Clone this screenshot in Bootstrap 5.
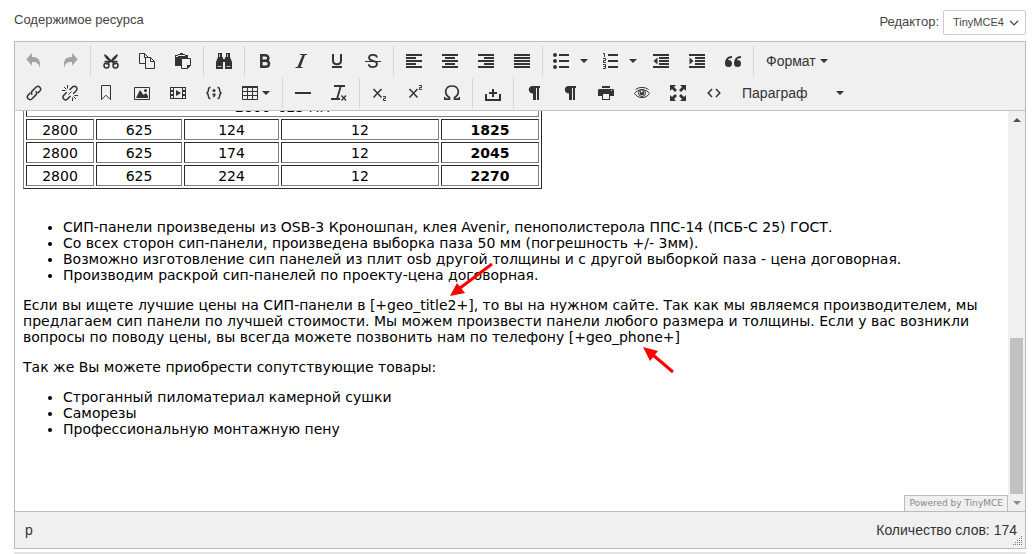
<!DOCTYPE html>
<html lang="ru">
<head>
<meta charset="utf-8">
<meta name="viewport" content="width=device-width, initial-scale=1">
<title>Содержимое ресурса</title>
<link href="https://cdn.jsdelivr.net/npm/bootstrap@5.3.0/dist/css/bootstrap.min.css" rel="stylesheet">
<style>
body{font-family:"Liberation Sans",Arial,sans-serif;font-size:14px;line-height:20px;color:#333;background:#fff;overflow:hidden}
.resource{padding:7px 7px 0 14px}
.topline{font-size:13px;height:34px;color:#444}
.topline label{line-height:18px;padding-top:4px}
.topline .pick-label{padding-top:6px}
.pick{width:83px;height:25px;margin-top:3px;font-size:11px;padding:0 0 0 9px;border:1px solid #ccc;border-radius:2px;color:#444;background-position:right 6px center;background-size:10px 12px;box-shadow:none}
.editor{border:1px solid #bbb}
.toolbars{background:#f0f0f0;border-bottom:1px solid #c5c5c5;padding:4px 1px 2px;gap:2px}
.tools{height:30px}
.tool{border:0;background:none;color:#333;height:30px;min-width:36px;padding:0 10px;display:flex;align-items:center;justify-content:center;gap:4px;line-height:20px}
.tool.split{padding:0 6px 0 8px;gap:11px;width:49px}
.tool.menu{padding:0 10px;width:48px}
.tool svg{width:16px;height:16px;flex:none}
.tool:disabled{color:#a3a3a3}
.tool::after{content:none}
.tool.drop::after{content:"";border:4px solid transparent;border-top-color:#333;border-bottom:0;flex:none}
.tool.wide{width:122px;justify-content:space-between}
.divider{width:1px;margin:0 2px;background:#d5d5d5;align-self:stretch}
.frame{height:400px;background:#fff}
.page-text{font-family:"DejaVu Sans",Verdana,sans-serif;color:#000;line-height:16px;padding:0 8px;overflow:hidden;min-width:0}
.page-text p{margin:0 0 14px}
.page-text ul{margin:0 0 14px;padding-left:40px}
.prices{border:1px solid;border-color:gray #2c2c2c #2c2c2c gray;border-collapse:separate;border-spacing:2px;width:519px;table-layout:fixed;margin:-18px 0 30px;text-align:center}
.prices td{border:1px solid;border-color:#2c2c2c gray gray #2c2c2c;padding:3px 1px 2px;height:21px;line-height:14px}
.arrows{left:0;top:0;width:100%;height:100%;pointer-events:none}
.scroller{width:17px;background:#f0f0f0;flex:none}
.arrow{height:17px;display:flex;align-items:center;justify-content:center}
.thumb{width:13px;height:156px;background:#c1c1c1;margin:auto auto 0}
.powered{right:17px;bottom:0;height:16px;padding:0 4px;border:1px solid #bbb;border-bottom:0;background:#f0f0f0;color:#8a8a8a;font:9px/14px "DejaVu Sans",sans-serif;text-decoration:none}
.status{background:#f0f0f0;border-top:1px solid #bbb;height:37px;padding:0 8px 0 10px}
.grip{right:2px;bottom:2px;width:10px;height:10px}
.nextbox{border-top:2px solid #e3e3e3;margin-top:3px;height:8px;background:#f0f0f0}
</style>
</head>
<body>
<svg class="d-none" xmlns="http://www.w3.org/2000/svg">
<symbol id="undo" viewBox="0 0 16 16"><path fill="currentColor" d="M6 0v4c6-.4 9.500 3.500 7.500 11-.2-4.600-2.800-6.300-7.500-6.100v3.800L.3 6.300z"/></symbol>
<symbol id="cut" viewBox="0 0 16 16"><g fill="none" stroke="currentColor" stroke-width="1.500"><circle cx="3.500" cy="12.500" r="2.500"/><circle cx="12.500" cy="12.500" r="2.500"/></g><path fill="currentColor" d="M1.300 1.200c2 .3 4 2.600 6.700 5.700 2.700-3.100 4.700-5.400 6.700-5.700.6 1.400-1.500 4.500-4.700 6.600h4.500v1.500h-4L13 11l-1 1-4-3-4 3-1-1 2.500-1.700h-4V7.800H6C2.800 5.700.7 2.600 1.300 1.200z"/></symbol>
<symbol id="copy" viewBox="0 0 16 16"><g fill="none" stroke="currentColor"><path d="M9.500 10.500h-9V.5h5l4 4z"/><path d="M5.500.5v4h4"/><path fill="#f0f0f0" d="M6.500 4.500h5l4 4v7h-9z"/><path d="M11.500 4.500v4h4"/></g></symbol>
<symbol id="paste" viewBox="0 0 16 16"><path fill="currentColor" d="M0 2h3V1h2a1.500 1.500 0 0 1 3 0h2v1h3v3h-1V4H3V3h7V2H3v1H1v1h11v1H6v8H0z"/><path fill="#f0f0f0" stroke="currentColor" d="M6.500 5.500h9v7l-3 3h-6z"/><path fill="currentColor" d="M12 16v-4h4z"/></symbol>
<symbol id="find" viewBox="0 0 16 16"><path fill="currentColor" d="M2 0h4v4h1v2h2V4h1V0h4v4l2 5v7H9V9H7v7H0V9l2-5z"/><path fill="#f0f0f0" d="M3 1h1v3H3zM11 1h1v3h-1zM1.500 13h4v1h-4zM10.500 13h4v1h-4z" opacity=".75"/></symbol>
<symbol id="bold" viewBox="0 0 16 16"><path fill="none" stroke="currentColor" stroke-width="2.500" d="M4.300 2.200v11.600h4.200c4.700 0 4.700-6 0-6H4.500h3.700c4.200 0 4.200-5.600 0-5.600H3"/></symbol>
<symbol id="italic" viewBox="0 0 16 16"><path fill="currentColor" d="M7 1h7v1h-2L7.500 14h2v1h-7v-1h2L9.500 2H7z"/></symbol>
<symbol id="under" viewBox="0 0 16 16"><path fill="none" stroke="currentColor" stroke-width="2" d="M4 1v6.500c0 5 8 5 8 0V1"/><path fill="currentColor" d="M3 13h10v2H3z"/></symbol>
<symbol id="strike" viewBox="0 0 16 16"><path fill="none" stroke="currentColor" stroke-width="1.800" d="M12 4.500C11.500.9 4 1.200 4 4.800c0 4.200 8 2 8 6 0 4.300-8 4.300-8.200.5"/><path fill="currentColor" d="M0 8h16v1H0z"/></symbol>
<symbol id="left" viewBox="0 0 16 16"><path fill="currentColor" d="M0 1h16v2H0zM0 4h10v2H0zM0 7h16v2H0zM0 10h10v2H0zM0 13h16v2H0z"/></symbol>
<symbol id="center" viewBox="0 0 16 16"><path fill="currentColor" d="M0 1h16v2H0zM3 4h10v2H3zM0 7h16v2H0zM3 10h10v2H3zM0 13h16v2H0z"/></symbol>
<symbol id="justify" viewBox="0 0 16 16"><path fill="currentColor" d="M0 1h16v2H0zM0 4h16v2H0zM0 7h16v2H0zM0 10h16v2H0zM0 13h16v2H0z"/></symbol>
<symbol id="bullets" viewBox="0 0 16 16"><g fill="currentColor"><path d="M6 1h10v2H6zM6 7h10v2H6zM6 13h10v2H6z"/><circle cx="2" cy="2" r="2"/><circle cx="2" cy="8" r="2"/><circle cx="2" cy="14" r="2"/></g></symbol>
<symbol id="numbers" viewBox="0 0 16 16"><path fill="currentColor" d="M6 1h10v2H6zM6 7h10v2H6zM6 13h10v2H6z"/><path fill="none" stroke="currentColor" d="M1 .5h1.500V4M1 5.500h2.500v2h-2v2H4M1 11.500h2.500v4H1M1.500 13.500h2"/></symbol>
<symbol id="outdent" viewBox="0 0 16 16"><path fill="currentColor" d="M0 1h16v2H0zM6 4h10v2H6zM6 7h10v2H6zM6 10h10v2H6zM0 13h16v2H0zM4.500 4.500v7L.5 8z"/></symbol>
<symbol id="indent" viewBox="0 0 16 16"><path fill="currentColor" d="M0 1h16v2H0zM6 4h10v2H6zM6 7h10v2H6zM6 10h10v2H6zM0 13h16v2H0zM.5 4.500v7l4-3.500z"/></symbol>
<symbol id="quote" viewBox="0 0 16 16"><path fill="currentColor" d="M3.500 7A3.500 3.500 0 1 1 0 10.500C0 6 2.500 3 7 3v2C4.800 5 3.500 5.700 2.800 7z"/><path fill="currentColor" d="M12.500 7A3.500 3.500 0 1 1 9 10.500C9 6 11.500 3 16 3v2c-2.200 0-3.500.7-4.200 2z"/></symbol>
<symbol id="link" viewBox="0 0 16 16"><g fill="none" stroke="currentColor" stroke-width="1.500"><path d="M6.300 9.700a2.700 2.700 0 0 1 0-3.800l3.900-3.900a2.700 2.700 0 0 1 3.800 3.800l-2.300 2.300"/><path d="M9.700 6.300a2.700 2.700 0 0 1 0 3.800L5.800 14A2.700 2.700 0 0 1 2 10.200l2.300-2.300"/></g></symbol>
<symbol id="unlink" viewBox="0 0 16 16"><g fill="none" stroke="currentColor" stroke-width="1.500"><path d="M7.500 5l3-3a2.500 2.500 0 0 1 3.700 3.700l-3 3M8.500 11l-3 3a2.500 2.500 0 0 1-3.700-3.700l3-3"/><path stroke-width="1" d="M5.500 0v3.500M2 2l2.500 2.500M0 5.500h3.500M10.500 12.500V16M11.500 11.500L14 14M12.500 10.500H16M6.500 9.500l3-3"/></g></symbol>
<symbol id="mark-page" viewBox="0 0 16 16"><path fill="none" stroke="currentColor" d="M3.500.5h9v14.200L8 10.200l-4.500 4.500z"/></symbol>
<symbol id="picture" viewBox="0 0 16 16"><path fill="none" stroke="currentColor" d="M.5 2.500h15v12H.5z"/><path fill="currentColor" d="M2 13l4-8 3.500 5L12 8l2 3v2z"/><circle cx="11.500" cy="5.500" r="1.500" fill="currentColor"/></symbol>
<symbol id="video" viewBox="0 0 16 16"><path fill="currentColor" fill-rule="evenodd" d="M0 2h16v12H0zM1 3v2h2V3zm0 4v2h2V7zm0 4v2h2v-2zm12-8v2h2V3zm0 4v2h2V7zm0 4v2h2v-2zM4 3v10h8V3z"/><path fill="currentColor" d="M6 5l5 3-5 3z"/></symbol>
<symbol id="snippet" viewBox="0 0 16 16"><path fill="none" stroke="currentColor" stroke-width="1.500" d="M4.500 2.500C1 2 3.800 7.500.5 8c3.300.5.500 6 4 5.500M11.500 2.500C15 2 12.200 7.500 15.500 8c-3.300.5-.5 6-4 5.500"/><circle cx="8" cy="5.500" r="1.500" fill="currentColor"/><path fill="currentColor" d="M6.500 8.500h3c.4 2-.3 3.500-2.500 4v-1q1-.5 1-1H6.500z"/></symbol>
<symbol id="grid" viewBox="0 0 16 16"><path fill="none" stroke="currentColor" d="M.5 1.500h15v13H.5zM0 6.500h16M0 10.500h16M5.500 2v12M10.500 2v12"/><path fill="currentColor" d="M0 1h16v2H0z"/></symbol>
<symbol id="rule" viewBox="0 0 16 16"><path fill="currentColor" d="M0 7h16v2H0z"/></symbol>
<symbol id="clear" viewBox="0 0 16 16"><path fill="none" stroke="currentColor" stroke-width="1.800" d="M3 1h11M9.800 1L6 14"/><path fill="currentColor" d="M0 13h9v2H0z"/><path fill="none" stroke="currentColor" stroke-width="1.300" d="M10.500 10.500l4.500 5M15 10.500l-4.500 5"/></symbol>
<symbol id="sub" viewBox="0 0 16 16"><path fill="none" stroke="currentColor" stroke-width="1.500" d="M1.500 4l8 8.500M9.500 4l-8 8.500"/><path fill="none" stroke="currentColor" d="M11 11.500h2.500v2h-2v2H14"/></symbol>
<symbol id="sup" viewBox="0 0 16 16"><path fill="none" stroke="currentColor" stroke-width="1.500" d="M1.500 4l8 8.500M9.500 4l-8 8.500"/><path fill="none" stroke="currentColor" d="M11 .5h2.500v2h-2v2H14"/></symbol>
<symbol id="omega" viewBox="0 0 16 16"><path fill="none" stroke="currentColor" stroke-width="1.700" d="M.5 14.200h5V12.500C-.5 9 1 1 8 1s8.500 8 2.500 11.500v1.700h5M.7 15v-3M15.300 15v-3"/></symbol>
<symbol id="nbsp" viewBox="0 0 16 16"><path fill="currentColor" d="M0 9h2v5h12V9h2v7H0zM7 4h2v3h3v2H9v3H7V9H4V7h3z"/></symbol>
<symbol id="para" viewBox="0 0 16 16"><path fill="currentColor" d="M6.500 1H14v2h-1v12h-2V3h-1v12H7V8.500C1.500 8.500 1.500 1 6.500 1z"/></symbol>
<symbol id="print" viewBox="0 0 16 16"><path fill="currentColor" d="M4 1h8v2H4zM1 4h14l1 1v6h-4v4H4v-4H0V5z"/><path fill="#f0f0f0" d="M5 9h6v5H5zM13 5h1v1h-1z"/></symbol>
<symbol id="eye" viewBox="0 0 16 16"><path fill="none" stroke="currentColor" d="M.5 8.500C4 3.500 12 3.500 15.500 8.500 12 14 4 14 .5 8.500zM1.500 4.500C5 1.800 11 1.800 14.500 4.500"/><circle cx="8" cy="8" r="3.500" fill="none" stroke="currentColor"/><circle cx="8" cy="8" r="2.300" fill="currentColor"/><path fill="#f0f0f0" d="M7 6h1.500v1.500H7z"/></symbol>
<symbol id="full" viewBox="0 0 16 16"><path fill="currentColor" d="M0 0h6L4 2l3 3-2 2-3-3-2 2zM16 0v6l-2-2-3 3-2-2 3-3-2-2zM0 16v-6l2 2 3-3 2 2-3 3 2 2zM16 16h-6l2-2-3-3 2-2 3 3 2-2z"/></symbol>
<symbol id="source" viewBox="0 0 16 16"><path fill="none" stroke="currentColor" stroke-width="1.500" d="M6 4L2.200 8 6 12M10 4l3.800 4L10 12"/></symbol>
</svg>
<main class="resource">
<div class="topline d-flex justify-content-between">
<label for="content">Содержимое ресурса</label>
<div class="d-flex align-items-start gap-1"><label for="which" class="pick-label">Редактор:</label>
<select id="which" class="form-select pick"><option>TinyMCE4</option></select></div>
</div>
<section class="editor">
<div class="toolbars d-flex flex-column" role="toolbar">
<div class="tools d-flex">
<button class="tool" disabled aria-label="Отменить"><svg><use href="#undo"/></svg></button>
<button class="tool" disabled aria-label="Вернуть"><svg><use href="#undo" transform="matrix(-1 0 0 1 16 0)"/></svg></button>
<span class="divider"></span>
<button class="tool" aria-label="Вырезать"><svg><use href="#cut"/></svg></button>
<button class="tool" aria-label="Копировать"><svg><use href="#copy"/></svg></button>
<button class="tool" aria-label="Вставить"><svg><use href="#paste"/></svg></button>
<span class="divider"></span>
<button class="tool" aria-label="Найти"><svg><use href="#find"/></svg></button>
<span class="divider"></span>
<button class="tool" aria-label="Полужирный"><svg><use href="#bold"/></svg></button>
<button class="tool" aria-label="Курсив"><svg><use href="#italic"/></svg></button>
<button class="tool" aria-label="Подчеркнутый"><svg><use href="#under"/></svg></button>
<button class="tool" aria-label="Зачеркнутый"><svg><use href="#strike"/></svg></button>
<span class="divider"></span>
<button class="tool" aria-label="По левому краю"><svg><use href="#left"/></svg></button>
<button class="tool" aria-label="По центру"><svg><use href="#center"/></svg></button>
<button class="tool" aria-label="По правому краю"><svg><use href="#left" transform="matrix(-1 0 0 1 16 0)"/></svg></button>
<button class="tool" aria-label="По ширине"><svg><use href="#justify"/></svg></button>
<span class="divider"></span>
<button class="tool split drop" aria-label="Маркированный список"><svg><use href="#bullets"/></svg></button>
<button class="tool split drop" aria-label="Нумерованный список"><svg><use href="#numbers"/></svg></button>
<button class="tool" aria-label="Уменьшить отступ"><svg><use href="#outdent"/></svg></button>
<button class="tool" aria-label="Увеличить отступ"><svg><use href="#indent"/></svg></button>
<button class="tool" aria-label="Цитата"><svg><use href="#quote"/></svg></button>
<span class="divider"></span>
<button class="tool drop">Формат</button>
</div>
<div class="tools d-flex">
<button class="tool" aria-label="Ссылка"><svg><use href="#link"/></svg></button>
<button class="tool" aria-label="Удалить ссылку"><svg><use href="#unlink"/></svg></button>
<button class="tool" aria-label="Якорь"><svg><use href="#mark-page"/></svg></button>
<button class="tool" aria-label="Изображение"><svg><use href="#picture"/></svg></button>
<button class="tool" aria-label="Видео"><svg><use href="#video"/></svg></button>
<button class="tool" aria-label="Пример кода"><svg><use href="#snippet"/></svg></button>
<button class="tool menu drop" aria-label="Таблица"><svg><use href="#grid"/></svg></button>
<span class="divider"></span>
<button class="tool" aria-label="Линия"><svg><use href="#rule"/></svg></button>
<button class="tool" aria-label="Очистить формат"><svg><use href="#clear"/></svg></button>
<span class="divider"></span>
<button class="tool" aria-label="Нижний индекс"><svg><use href="#sub"/></svg></button>
<button class="tool" aria-label="Верхний индекс"><svg><use href="#sup"/></svg></button>
<button class="tool" aria-label="Символы"><svg><use href="#omega"/></svg></button>
<span class="divider"></span>
<button class="tool" aria-label="Неразрывный пробел"><svg><use href="#nbsp"/></svg></button>
<span class="divider"></span>
<button class="tool" aria-label="Показывать блоки"><svg><use href="#para"/></svg></button>
<button class="tool" aria-label="Непечатаемые символы"><svg><use href="#para"/></svg></button>
<button class="tool" aria-label="Печать"><svg><use href="#print"/></svg></button>
<button class="tool" aria-label="Предпросмотр"><svg><use href="#eye"/></svg></button>
<button class="tool" aria-label="Полный экран"><svg><use href="#full"/></svg></button>
<button class="tool" aria-label="Исходный код"><svg><use href="#source"/></svg></button>
<button class="tool drop wide">Параграф</button>
</div>
</div>
<div class="frame d-flex position-relative">
<div class="page-text flex-grow-1" id="content">
<table class="prices">
<colgroup><col style="width:68px"><col style="width:86px"><col style="width:95px"><col style="width:158px"><col style="width:98px"></colgroup>
<tbody>
<tr><td colspan="5">2800*625 мм</td></tr>
<tr><td>2800</td><td>625</td><td>124</td><td>12</td><td><b>1825</b></td></tr>
<tr><td>2800</td><td>625</td><td>174</td><td>12</td><td><b>2045</b></td></tr>
<tr><td>2800</td><td>625</td><td>224</td><td>12</td><td><b>2270</b></td></tr>
</tbody></table>
<ul>
<li>СИП-панели произведены из OSB-3 Кроношпан, клея Avenir, пенополистерола ППС-14 (ПСБ-С 25) ГОСТ.</li>
<li>Со всех сторон сип-панели, произведена выборка паза 50 мм (погрешность +/- 3мм).</li>
<li>Возможно изготовление сип панелей из плит osb другой толщины и с другой выборкой паза - цена договорная.</li>
<li>Производим раскрой сип-панелей по проекту-цена договорная.</li>
</ul>
<p>Если вы ищете лучшие цены на СИП-панели в [+geo_title2+], то вы на нужном сайте. Так как мы являемся производителем, мы предлагаем сип панели по лучшей стоимости. Мы можем произвести панели любого размера и толщины. Если у вас возникли вопросы по поводу цены, вы всегда можете позвонить нам по телефону [+geo_phone+]</p>
<p>Так же Вы можете приобрести сопутствующие товары:</p>
<ul>
<li>Строганный пиломатериал камерной сушки</li>
<li>Саморезы</li>
<li>Профессиональную монтажную пену</li>
</ul>
</div>
<div class="scroller d-flex flex-column">
<div class="arrow"><svg width="8" height="4"><path fill="#505050" d="M0 4l4-4 4 4z"/></svg></div>
<div class="thumb"></div>
<div class="arrow"><svg width="8" height="4"><path fill="#8a8a8a" d="M0 0h8L4 4z"/></svg></div>
</div>
<svg class="arrows position-absolute"><g fill="red" stroke="red"><path stroke-width="3" d="M477 153l-32 24M658 261l-20-17"/><path stroke="none" d="M435 185l7-13 8 10zM628 236l15 4-8 10z"/></g></svg>
<a href="#" class="powered position-absolute">Powered by TinyMCE</a>
</div>
<footer class="status d-flex align-items-center justify-content-between position-relative">
<span>p</span><span>Количество слов: 174</span>
<svg class="grip position-absolute" viewBox="0 0 10 10"><path fill="none" stroke="#777" stroke-dasharray="1 1" d="M8 .5h1M6 2.500h3M4 4.500h5M2 6.500h7M0 8.500h9"/></svg>
</footer>
</section>
<div class="nextbox"></div>
</main>
<script src="https://cdn.jsdelivr.net/npm/bootstrap@5.3.0/dist/js/bootstrap.bundle.min.js"></script>
</body>
</html>
